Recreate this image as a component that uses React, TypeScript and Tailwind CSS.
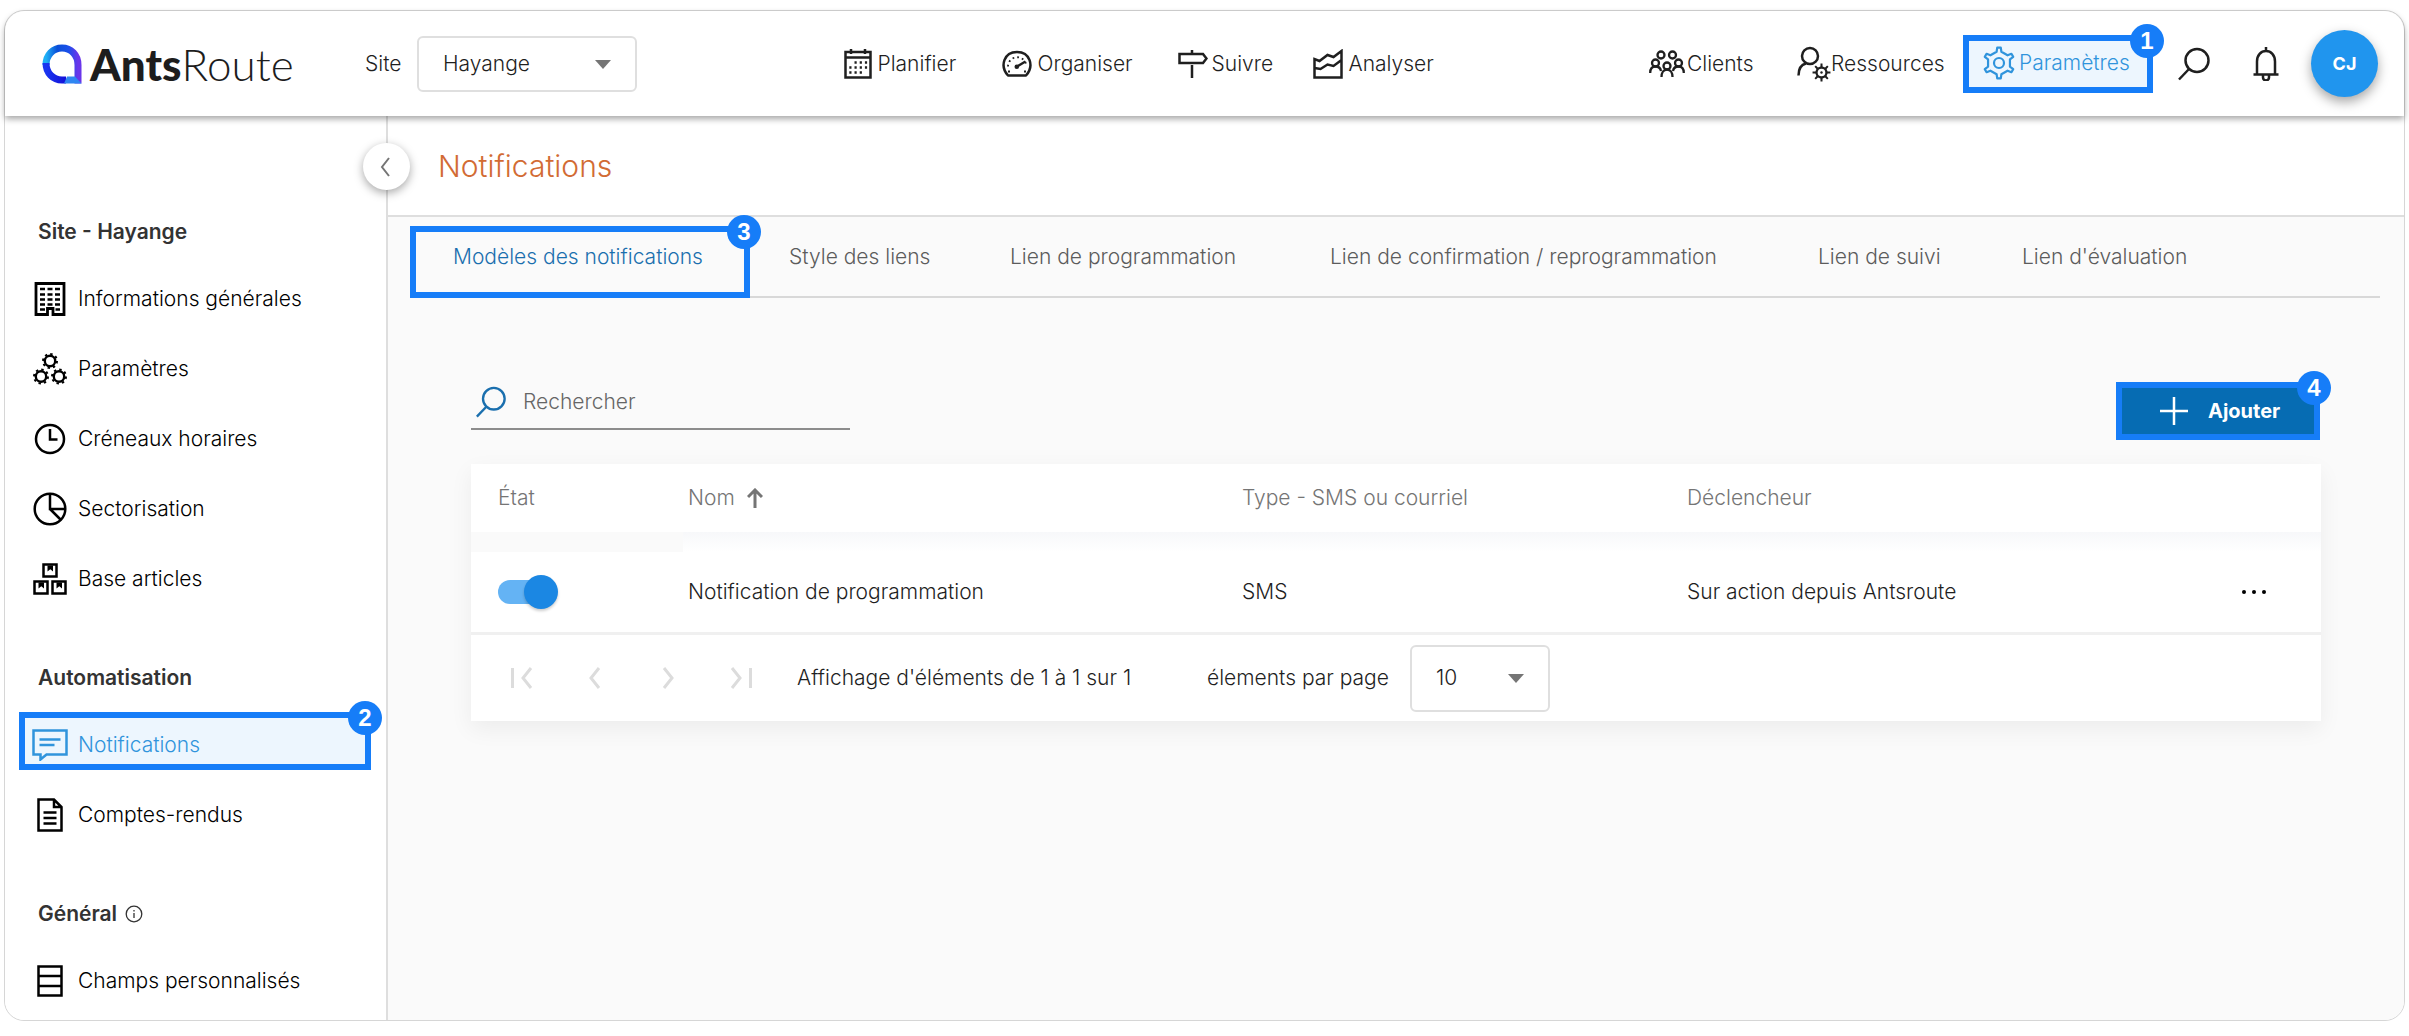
import type { ReactNode, SVGProps } from 'react';

/* ---------- icons ---------- */

function gearPath(cx: number, cy: number, outer: number, inner: number, teeth: number, top: number, base: number) {
  const points: string[] = [];
  const step = (Math.PI * 2) / teeth;
  const at = (r: number, a: number) => `${(cx + r * Math.sin(a)).toFixed(2)} ${(cy - r * Math.cos(a)).toFixed(2)}`;
  for (let i = 0; i < teeth; i++) {
    const a = i * step;
    points.push(at(inner, a - step * base), at(outer, a - step * top), at(outer, a + step * top), at(inner, a + step * base));
  }
  return `M${points.join('L')}Z`;
}

function Svg({ children, ...props }: SVGProps<SVGSVGElement>) {
  return (
    <svg fill="none" stroke="currentColor" strokeWidth="2.5" aria-hidden="true" {...props}>
      {children}
    </svg>
  );
}

const Calendar = () => (
  <Svg viewBox="0 0 28 30" className="h-[30px] w-7 shrink-0">
    <path d="M1.5 3h25v25.5h-25zM1.5 8.5h25M7 0v5M21 0v5" />
    <g strokeDasharray="2.2 3" strokeWidth="2.4">
      <path d="M10.5 13.5h13M5.3 18.5h18M5.3 23.5h13" />
    </g>
  </Svg>
);

const Gauge = () => (
  <Svg viewBox="0 0 30 28" className="h-7 w-[30px] shrink-0">
    <path d="M6 25.5C-2.5 16 2 2 15 2s17.500 14 9 23.500z" strokeLinejoin="round" />
    <path d="M15 16.500l8.500-5" strokeWidth="2.500" />
    <circle cx="14.800" cy="16.800" r="2.300" fill="currentColor" stroke="none" />
    <path d="M6 16.500A9 9 0 0 1 24.500 16.500" strokeDasharray="1.800 3" strokeWidth="1.800" />
    <path d="M6 21.500h2M22 21.500h2" strokeWidth="1.800" />
  </Svg>
);

const Signpost = () => (
  <Svg viewBox="0 0 30 30" className="size-[30px] shrink-0">
    <path d="M1.500 5h23.500l3.500 4.500-3.500 4.500H1.500zM14 1v4M14 16v13" />
  </Svg>
);

const AreaChart = () => (
  <Svg viewBox="0 0 30 30" className="size-[30px] shrink-0">
    <path d="M1.500 28.500V10l5 2 8-6 6 2 8-6v26.500zM1.500 19l6 1 7-4.500 6 1.500 8-6" />
  </Svg>
);

const Clients = () => (
  <Svg viewBox="0 0 36 28" className="h-7 w-9 shrink-0" strokeWidth="2.300">
    <circle cx="12" cy="5" r="3.500" />
    <circle cx="23.500" cy="5" r="3.500" />
    <circle cx="6.500" cy="13" r="3.500" />
    <circle cx="29.500" cy="13" r="3.500" />
    <circle cx="18" cy="16" r="3.500" />
    <path d="M1.200 23c0-4 2-6.500 5.300-6.500S11.500 18 12 21M24 21c.500-3 2-4.500 5.500-4.500s5.300 2.500 5.300 6.500M12.500 27c0-4 2-7.500 5.500-7.500s5.500 3.500 5.500 7.500" />
  </Svg>
);

const Resources = () => (
  <Svg viewBox="0 0 34 36" className="h-9 w-[34px] shrink-0">
    <circle cx="13" cy="10" r="8" />
    <path d="M1.500 29.500C1.500 22 5 18.500 9 17.500" />
    <path d={gearPath(24.5, 26.5, 9, 6.2, 8, 0.14, 0.22)} fill="currentColor" stroke="none" />
    <circle cx="24.500" cy="26.500" r="3.800" fill="white" stroke="none" />
    <circle cx="24.500" cy="26.500" r="1.200" fill="currentColor" stroke="none" />
  </Svg>
);

const Gear = () => (
  <Svg viewBox="0 0 32 34" className="h-[34px] w-8 shrink-0" strokeWidth="2.200">
    <path d={gearPath(16, 17, 15.5, 11.5, 6, 0.11, 0.2)} strokeLinejoin="round" />
    <circle cx="16" cy="17" r="5" />
  </Svg>
);

const Magnifier = ({ className }: { className: string }) => (
  <Svg viewBox="0 0 34 34" className={className}>
    <circle cx="20" cy="13.500" r="11.500" />
    <path d="M12 22L2 32.500" />
  </Svg>
);

const Bell = () => (
  <Svg viewBox="0 0 26 34" className="h-[34px] w-[26px]">
    <path d="M.500 27.500h25M4 27.500V14.500C4 8 8 4 13 4s9 4 9 10.500v13M13 0v4" />
    <path d="M10 28v2.500a3 3 0 0 0 6 0V28" />
  </Svg>
);

const Building = () => (
  <Svg viewBox="0 0 32 34" className="h-[34px] w-8">
    <path d="M2 1.500h28v31H19v-6h-5.500v6H2z" strokeWidth="2.800" />
    <path d="M6 7h20M6 12.500h20M6 17.500h20M6 22.500h20M6 27.500h5M21.500 27.500h4.500" strokeDasharray="5 2.500" strokeWidth="2.500" />
  </Svg>
);

const Gears = () => (
  <Svg viewBox="0 0 34 32" className="h-8 w-[34px]">
    {[[17, 8], [8, 23.5], [26, 23.5]].map(([x, y]) => (
      <g key={x}>
        <circle cx={x} cy={y} r="5.200" strokeWidth="2.400" />
        <circle cx={x} cy={y} r="7" strokeWidth="2" strokeDasharray="2.400 3.100" />
      </g>
    ))}
  </Svg>
);

const Clock = () => (
  <Svg viewBox="0 0 32 32" className="size-8">
    <circle cx="16" cy="16" r="14" />
    <path d="M16 6v10.500h7.500" />
  </Svg>
);

const Pie = () => (
  <Svg viewBox="0 0 34 34" className="size-[34px]">
    <circle cx="17" cy="17" r="15.300" />
    <path d="M17 1.500V17h15.500M17 17l10.500 10.500" />
  </Svg>
);

const Boxes = () => (
  <Svg viewBox="0 0 34 32" className="h-8 w-[34px]">
    <path d="M10.500 1.500h13v12h-13zM1.500 18.500h13v12h-13zM19.500 18.500h13v12h-13z" />
    <path d="M14.500 2.500h5.500v6l-2.700-2.200-2.800 2.200zM5.500 19.500H11v6l-2.700-2.200-2.800 2.200zM23.500 19.500H29v6l-2.700-2.200-2.800 2.200z" fill="currentColor" stroke="none" />
  </Svg>
);

const Message = () => (
  <Svg viewBox="0 0 36 32" className="h-8 w-9">
    <path d="M1.500 1.500h33v24H14.500L8.500 30.500v-5h-7zM7.500 10.500h21M7.500 16h15" />
  </Svg>
);

const Doc = () => (
  <Svg viewBox="0 0 26 34" className="h-[34px] w-[26px]">
    <path d="M1.500 1.500H17l7.500 7.500v23.500h-23zM17 1.500V9h7.500M6.500 14.500h13M6.500 20h13M6.500 25.500h13" />
  </Svg>
);

const Fields = () => (
  <Svg viewBox="0 0 26 32" className="h-8 w-[26px]">
    <path d="M1.500 1.500h23v29h-23zM1.500 11h23M1.500 21h23" />
  </Svg>
);

const Info = () => (
  <Svg viewBox="0 0 18 18" className="size-[18px]" strokeWidth="1.300">
    <circle cx="9" cy="9" r="7.800" />
    <path d="M9 8v5M9 5v1.500" />
  </Svg>
);

const Logo = () => (
  <svg viewBox="0 0 40 40" className="size-10 shrink-0" fill="none" strokeWidth="7" aria-hidden="true">
    <defs>
      <linearGradient id="logo-top" x1="0" y1="0.500" x2="1" y2="0.500">
        <stop offset="0" stopColor="#1fb0f5" />
        <stop offset="0.350" stopColor="#0a4fd8" />
        <stop offset="0.700" stopColor="#1b50ea" />
        <stop offset="1" stopColor="#6a35ea" />
      </linearGradient>
      <linearGradient id="logo-bottom" x1="0" y1="0" x2="1" y2="0">
        <stop offset="0" stopColor="#1a35f0" />
        <stop offset="1" stopColor="#1410d8" />
      </linearGradient>
    </defs>
    <path d="M4 21C4 11 11 4 20 4s16 7 16 17v18.500" stroke="url(#logo-top)" />
    <path d="M4 19c0 10 7 17 16 17h4" stroke="url(#logo-bottom)" />
    <path d="M22 39.500l3-7h8l6.500 7z" fill="#2f86f2" />
  </svg>
);

/* ---------- shared parts ---------- */

function Marker({ n, className }: { n: number; className: string }) {
  return (
    <span className={`pointer-events-none absolute z-20 border-[6px] border-[#167df8] ${className}`}>
      <span className="absolute -top-[17px] -right-[17px] flex size-[34px] items-center justify-center rounded-full bg-[#167df8] font-['Liberation_Sans',sans-serif] text-2xl font-bold text-white">
        {n}
      </span>
    </span>
  );
}

function Caret({ className }: { className: string }) {
  return (
    <svg viewBox="0 0 16 9" fill="#757575" className={`pointer-events-none absolute h-[9px] w-4 ${className}`} aria-hidden="true">
      <path d="M0 0h16L8 9z" />
    </svg>
  );
}

function NavLink({ icon, label, className }: { icon: ReactNode; label: string; className: string }) {
  return (
    <a href="#" className={`flex h-14 items-center ${className}`}>
      {icon}
      {label}
    </a>
  );
}

type Item = { label: string; icon: ReactNode; active?: boolean };

const sections: { title: string; info?: boolean; items: Item[] }[] = [
  {
    title: 'Site - Hayange',
    items: [
      { label: 'Informations générales', icon: <Building /> },
      { label: 'Paramètres', icon: <Gears /> },
      { label: 'Créneaux horaires', icon: <Clock /> },
      { label: 'Sectorisation', icon: <Pie /> },
      { label: 'Base articles', icon: <Boxes /> },
    ],
  },
  {
    title: 'Automatisation',
    items: [
      { label: 'Notifications', icon: <Message />, active: true },
      { label: 'Comptes-rendus', icon: <Doc /> },
    ],
  },
  { title: 'Général', info: true, items: [{ label: 'Champs personnalisés', icon: <Fields /> }] },
];

const tabs = [
  { label: 'Style des liens', width: 'w-[221px]' },
  { label: 'Lien de programmation', width: 'w-[320px]' },
  { label: 'Lien de confirmation / reprogrammation', width: 'w-[488px]' },
  { label: 'Lien de suivi', width: 'w-[204px]' },
  { label: "Lien d'évaluation", width: 'w-[200px]' },
];

const pagers = [
  { label: 'Première page', d: 'M2.500 2v20M21 2l-8 10 8 10' },
  { label: 'Page précédente', d: 'M16 2L8 12l8 10' },
  { label: 'Page suivante', d: 'M8 2l8 10-8 10' },
  { label: 'Dernière page', d: 'M3 2l8 10-8 10M21.500 2v20' },
];

/* ---------- page regions ---------- */

function Header() {
  return (
    <header className="relative z-10 flex h-[105px] items-center justify-between rounded-t-[20px] bg-white pr-[26px] pl-[37px] shadow-[0_3px_6px_rgba(0,0,0,0.35)]">
      <div className="flex items-center">
        <a href="#" className="flex w-[323px] items-center gap-2 font-[Lato,sans-serif] text-[44px] leading-none text-[#1d1d1d]">
          <Logo />
          <span>
            <b className="font-black">Ants</b>
            <span className="font-light">Route</span>
          </span>
        </a>
        <label htmlFor="site" className="w-[52px]">Site</label>
        <div className="relative">
          <select id="site" className="h-14 w-[220px] appearance-none rounded-md border-2 border-[#dfdfdf] bg-white pl-6">
            <option>Hayange</option>
          </select>
          <Caret className="top-6 right-[26px]" />
        </div>
      </div>

      <nav className="mr-2.5 flex items-center">
        <NavLink icon={<Calendar />} label="Planifier" className="w-[158px] gap-1.5" />
        <NavLink icon={<Gauge />} label="Organiser" className="w-[176px] gap-1.5" />
        <NavLink icon={<Signpost />} label="Suivre" className="w-[135px] gap-1" />
        <NavLink icon={<AreaChart />} label="Analyser" className="w-[120px] gap-1.5" />
      </nav>

      <div className="flex items-center">
        <NavLink icon={<Clients />} label="Clients" className="w-[148px] gap-0.5" />
        <NavLink icon={<Resources />} label="Ressources" className="w-[166px]" />
        <div className="relative mr-6 h-[58px] w-[190px] bg-[#edf6fe] text-[#3094dc]">
          <NavLink icon={<Gear />} label="Paramètres" className="gap-1 pl-5" />
          <Marker n={1} className="inset-0" />
        </div>
        <button type="button" aria-label="Rechercher sur le site" className="mr-[42px]">
          <Magnifier className="size-[34px]" />
        </button>
        <button type="button" aria-label="Alertes" className="mr-8">
          <Bell />
        </button>
        <button
          type="button"
          className="flex size-[67px] items-center justify-center rounded-full bg-[#2095ee] text-lg font-bold text-white shadow-[0_5px_12px_rgba(0,0,0,0.35)]"
        >
          CJ
        </button>
      </div>
    </header>
  );
}

function Sidebar() {
  return (
    <aside className="relative w-[383px] shrink-0 rounded-bl-[20px] border-r-2 border-[#dedede] bg-white pt-[84px] pb-1">
      <button
        type="button"
        aria-label="Réduire le menu"
        className="absolute top-[27px] -right-6 z-10 flex size-[47px] items-center justify-center rounded-full bg-white text-[#757575] shadow-[0_3px_10px_rgba(0,0,0,0.35)]"
      >
        <Svg viewBox="0 0 10 20" className="mr-1 h-5 w-2.5" strokeWidth="2">
          <path d="M9 1L2 10l7 9" />
        </Svg>
      </button>
      <nav className="flex flex-col gap-8">
        {sections.map((section) => (
          <section key={section.title}>
            <h2 className="flex h-16 items-center gap-2 pl-[33px] text-[21px] font-semibold text-[#333]">
              {section.title}
              {section.info && <Info />}
            </h2>
            <ul>
              {section.items.map((item) => (
                <li key={item.label} className="relative">
                  {item.active && <span className="absolute top-0.5 left-3.5 h-[58px] w-[352px] bg-[#edf6fe]" />}
                  <a
                    href="#"
                    className={`relative flex h-[70px] items-center gap-2.5 pl-[27px] ${item.active ? 'text-[#3094dc]' : 'text-black'}`}
                  >
                    <span className="flex w-9 justify-center">{item.icon}</span>
                    {item.label}
                  </a>
                  {item.active && <Marker n={2} className="top-0.5 left-3.5 h-[58px] w-[352px]" />}
                </li>
              ))}
            </ul>
          </section>
        ))}
      </nav>
    </aside>
  );
}

function NotificationTable() {
  return (
    <div className="mt-6 bg-white shadow-[0_8px_22px_rgba(0,0,0,0.06)]">
      <table className="w-full table-fixed border-separate border-spacing-0 text-left">
        <thead>
          <tr className="h-[68px] text-[#757575]">
            <th className="w-[212px] pl-[27px] font-[350]">État</th>
            <th className="w-[30%] pl-[5px] font-[350]">
              <button type="button" className="flex items-center gap-3">
                Nom
                <Svg viewBox="0 0 16 20" className="h-5 w-4" strokeWidth="3">
                  <path d="M8 20V2M1 9l7-7 7 7" />
                </Svg>
              </button>
            </th>
            <th className="w-[24%] pl-1 font-[350]">Type - SMS ou courriel</th>
            <th className="pl-[5px] font-[350]">Déclencheur</th>
            <th className="w-[92px]" aria-label="Actions" />
          </tr>
        </thead>
        <tbody>
          <tr>
            <td className="bg-[#fafafa]" />
            <td colSpan={4} className="h-5 bg-linear-to-b from-[#f7f8fa] to-white" />
          </tr>
          <tr className="h-20">
            <td className="pl-[27px]">
              <label className="relative flex w-[60px] cursor-pointer items-center">
                <input type="checkbox" role="switch" defaultChecked className="sr-only" aria-label="Activer Notification de programmation" />
                <span className="h-6 w-[52px] rounded-full bg-[#64b3f4]" />
                <span className="absolute right-0 size-[34px] rounded-full bg-[#1b87e3] shadow-[0_2px_3px_rgba(0,0,0,0.2)]" />
              </label>
            </td>
            <td className="pl-[5px]">Notification de programmation</td>
            <td className="pl-1">SMS</td>
            <td className="pl-[5px]">Sur action depuis Antsroute</td>
            <td>
              <button type="button" aria-label="Plus d'actions" className="ml-3 block text-black">
                <svg viewBox="0 0 26 6" className="h-1.5 w-[26px]" fill="currentColor" aria-hidden="true">
                  <circle cx="3" cy="3" r="2" />
                  <circle cx="13" cy="3" r="2" />
                  <circle cx="23" cy="3" r="2" />
                </svg>
              </button>
            </td>
          </tr>
        </tbody>
      </table>
      <div className="flex h-[89px] items-center border-t-3 border-[#f0f0f0] pl-[14px]">
        <div className="flex w-[312px]">
          {pagers.map((p) => (
            <button key={p.label} type="button" disabled aria-label={p.label} className="flex w-[73px] justify-center text-[#dcdcdc]">
              <Svg viewBox="0 0 24 24" className="size-6" strokeWidth="3">
                <path d={p.d} />
              </Svg>
            </button>
          ))}
        </div>
        <p className="w-[410px]">Affichage d'éléments de 1 à 1 sur 1</p>
        <label htmlFor="page-size" className="w-[203px]">élements par page</label>
        <div className="relative">
          <select id="page-size" className="h-[67px] w-[140px] appearance-none rounded-md border-2 border-[#dfdfdf] bg-white pl-6">
            <option>10</option>
          </select>
          <Caret className="top-[29px] right-[26px]" />
        </div>
      </div>
    </div>
  );
}

export default function App() {
  return (
    <div className="bg-white px-1 pt-[10px] pb-3.5 font-[Inter,sans-serif] text-[21px] leading-7 font-[350] text-[#1f1f1f]">
      <div className="rounded-[20px] border border-[#d6d6d6]">
        <Header />
        <div className="flex">
          <Sidebar />
          <main className="min-w-0 grow rounded-br-[20px] bg-[#fafafa]">
            <div className="flex h-[101px] items-center border-b-2 border-[#dedede] bg-white pl-[50px]">
              <h1 className="text-[30px] text-[#d26b34]">Notifications</h1>
            </div>
            <div role="tablist" className="mr-6 ml-[22px] flex h-[81px] items-center border-b-2 border-[#d8d8d8] text-[#5c5c5c]">
              <div className="relative flex w-[379px] shrink-0 items-center self-stretch">
                <button type="button" role="tab" aria-selected="true" className="pl-[43px] text-[#1a6fae]">
                  Modèles des notifications
                </button>
                <Marker n={3} className="top-[9px] left-0 h-[72px] w-[340px]" />
              </div>
              {tabs.map((t) => (
                <button key={t.label} type="button" role="tab" aria-selected="false" className={`shrink-0 text-left whitespace-nowrap ${t.width}`}>
                  {t.label}
                </button>
              ))}
            </div>
            <div className="pt-[84px] pr-[83px] pl-[83px]">
              <div className="flex items-start justify-between">
                <label className="flex h-12 w-[379px] items-center gap-4 border-b-2 border-[#8c8c8c] pb-1.5 pl-1 text-[#1a6fae]">
                  <Magnifier className="size-8 shrink-0" />
                  <input type="search" placeholder="Rechercher" aria-label="Rechercher" className="w-full min-w-0 bg-transparent outline-none placeholder:text-[#666]" />
                </label>
                <div className="relative mr-px">
                  <button type="button" className="flex h-[58px] w-[204px] items-center gap-5 bg-[#066cb3] pl-11 text-xl font-bold text-white">
                    <Svg viewBox="0 0 28 28" className="size-7" strokeWidth="2.500">
                      <path d="M14 0v28M0 14h28" />
                    </Svg>
                    Ajouter
                  </button>
                  <Marker n={4} className="inset-0" />
                </div>
              </div>
              <NotificationTable />
            </div>
          </main>
        </div>
      </div>
    </div>
  );
}
